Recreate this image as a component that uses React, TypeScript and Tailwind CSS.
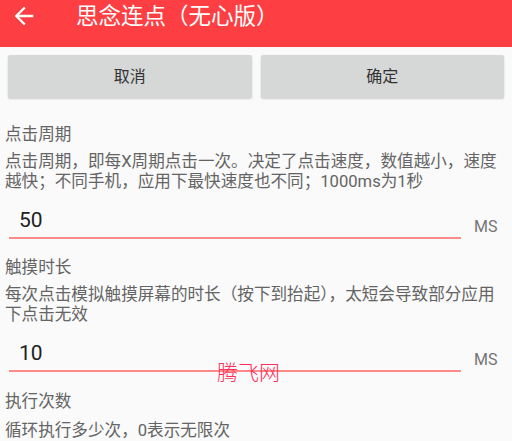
const FONT = 'font-[Roboto,"Noto_Sans_CJK_SC",sans-serif]';

function Field({ label, desc, value }: { label: string; desc: string; value: string }) {
  return (
    <div className="px-[5px]">
      <div className="text-[16.6px] leading-[20px] text-[#646464]">{label}</div>
      <div className="mt-[7px] text-[16.6px] leading-[20px] text-[#646464]">{desc}</div>
      <div className="mt-[16px] flex items-end pl-[4px]">
        <div className="w-[452px]">
          <div className="pl-[10px] text-[21px] leading-[24px] text-[#212121]">{value}</div>
          <div className="mt-[5px] h-[2px] bg-[#ff8a8a]" />
        </div>
        <div className="ml-[13px] mb-[2px] text-[16px] leading-[20px] text-[#757575]">MS</div>
      </div>
    </div>
  );
}

export default function App() {
  return (
    <div className={`relative w-[512px] h-[441px] overflow-hidden bg-[#fafafa] ${FONT}`}>
      <div className="flex h-[47px] items-center bg-[#fd3e42] pb-4 text-white">
        <svg className="ml-[10px]" width="28" height="28" viewBox="0 0 24 24" fill="white">
          <path d="M20 11H7.83l5.59-5.59L12 4l-8 8 8 8 1.41-1.41L7.83 13H20v-2z" />
        </svg>
        <div className="ml-[38px] text-[22.5px] leading-[28px]">思念连点（无心版）</div>
      </div>

      <div className="flex gap-[9px] px-2 pt-2">
        <button className="h-[43px] flex-1 rounded-[2px] bg-[#d6d7d7] text-[16px] text-[#333] shadow-[0_1px_2px_rgba(0,0,0,0.18)]">
          取消
        </button>
        <button className="h-[43px] flex-1 rounded-[2px] bg-[#d6d7d7] text-[16px] text-[#333] shadow-[0_1px_2px_rgba(0,0,0,0.18)]">
          确定
        </button>
      </div>

      <div className="mt-[27px]">
        <Field
          label="点击周期"
          desc="点击周期，即每X周期点击一次。决定了点击速度，数值越小，速度越快；不同手机，应用下最快速度也不同；1000ms为1秒"
          value="50"
        />
        <div className="mt-[19px]">
          <Field
            label="触摸时长"
            desc="每次点击模拟触摸屏幕的时长（按下到抬起），太短会导致部分应用下点击无效"
            value="10"
          />
        </div>
        <div className="mt-[20px] px-[5px]">
          <div className="text-[16.6px] leading-[20px] text-[#646464]">执行次数</div>
          <div className="mt-[9px] text-[16.6px] leading-[20px] text-[#646464]">循环执行多少次，0表示无限次</div>
        </div>
      </div>

      <div className="absolute left-[217px] top-[359px] text-[21px] leading-[28px] text-[#ff2e5a] font-[&quot;Liberation_Serif&quot;,&quot;Noto_Sans_CJK_SC&quot;,serif] font-light">
        腾飞网
      </div>
    </div>
  );
}
